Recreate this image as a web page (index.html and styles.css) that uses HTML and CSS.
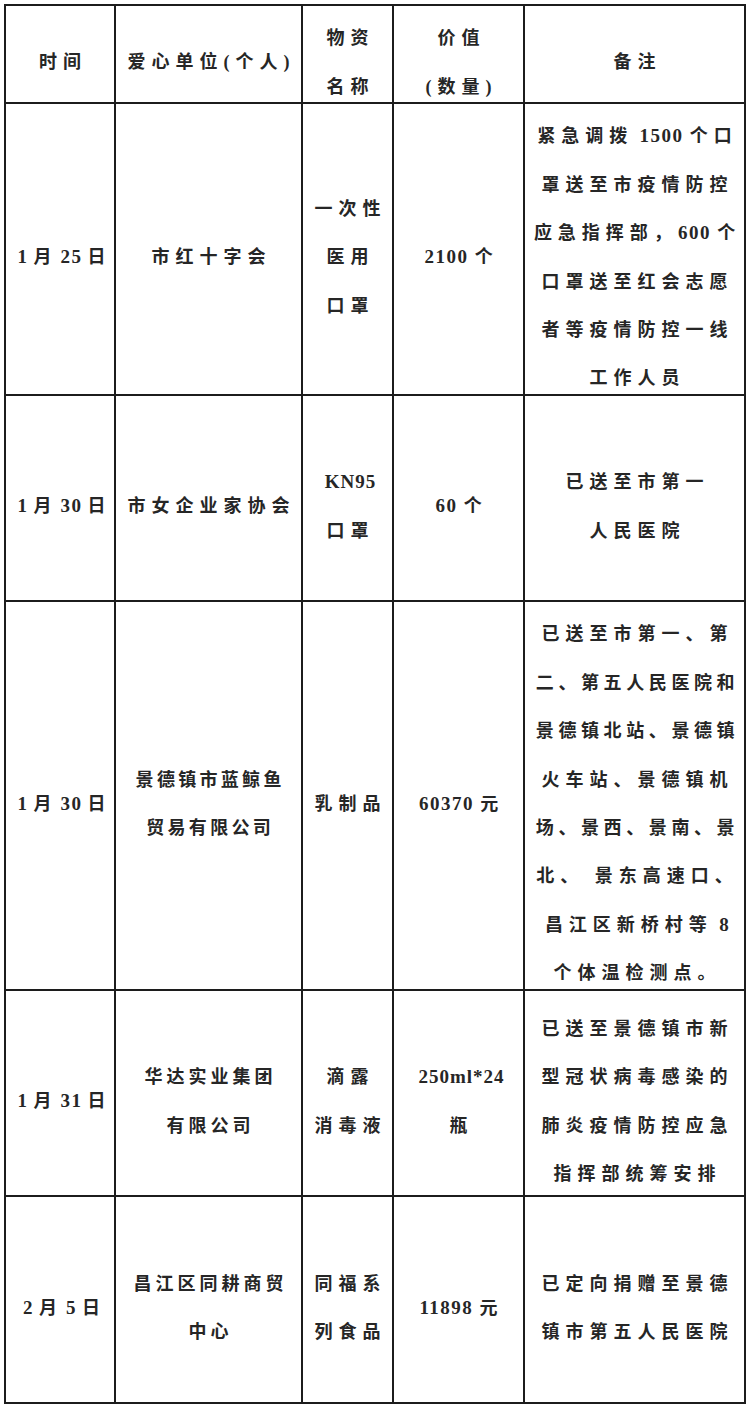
FILE: index.html
```html
<!DOCTYPE html>
<html lang="zh-CN">
<head>
<meta charset="utf-8">
<title>捐赠物资明细</title>
<link rel="stylesheet" href="styles.css">
</head>
<body>
<div class="table">
  <div class="cell"><p>时间</p></div>
  <div class="cell"><p>爱心单位(个人)</p></div>
  <div class="cell"><p>物资<br>名称</p></div>
  <div class="cell"><p>价值<br>(数量)</p></div>
  <div class="cell"><p>备注</p></div>

  <div class="cell date"><p><span class="num">1</span>月<span class="num">25</span>日</p></div>
  <div class="cell"><p>市红十字会</p></div>
  <div class="cell"><p>一次性<br>医用<br>口罩</p></div>
  <div class="cell"><p><span class="num">2100 </span>个</p></div>
  <div class="cell"><p>紧急调拨<span class="num"> 1500 </span>个口<br>罩送至市疫情防控<br>应急指挥部，<span class="num">600 </span>个<br>口罩送至红会志愿<br>者等疫情防控一线<br>工作人员</p></div>

  <div class="cell date"><p><span class="num">1</span>月<span class="num">30</span>日</p></div>
  <div class="cell"><p>市女企业家协会</p></div>
  <div class="cell"><p><span class="num latin">KN95</span><br>口罩</p></div>
  <div class="cell"><p><span class="num">60 </span>个</p></div>
  <div class="cell"><p>已送至市第一<br>人民医院</p></div>

  <div class="cell date"><p><span class="num">1</span>月<span class="num">30</span>日</p></div>
  <div class="cell narrow"><p>景德镇市蓝鲸鱼<br>贸易有限公司</p></div>
  <div class="cell"><p>乳制品</p></div>
  <div class="cell"><p><span class="num">60370 </span>元</p></div>
  <div class="cell"><p>已送至市第一、第<br><span class="tight">二、第五人民医院和</span><br><span class="tight">景德镇北站、景德镇</span><br>火车站、景德镇机<br><span class="tight">场、景西、景南、景</span><br>北、 景东高速口、<br>昌江区新桥村等<span class="num"> 8</span><br>个体温检测点。</p></div>

  <div class="cell date"><p><span class="num">1</span>月<span class="num">31</span>日</p></div>
  <div class="cell medium"><p>华达实业集团<br>有限公司</p></div>
  <div class="cell"><p>滴露<br>消毒液</p></div>
  <div class="cell"><p><span class="num latin">250ml*24</span><br>瓶</p></div>
  <div class="cell"><p>已送至景德镇市新<br>型冠状病毒感染的<br>肺炎疫情防控应急<br>指挥部统筹安排</p></div>

  <div class="cell date"><p><span class="num">2</span>月<span class="num">5</span>日</p></div>
  <div class="cell medium"><p>昌江区同耕商贸<br>中心</p></div>
  <div class="cell"><p>同福系<br>列食品</p></div>
  <div class="cell"><p><span class="num">11898 </span>元</p></div>
  <div class="cell"><p>已定向捐赠至景德<br>镇市第五人民医院</p></div>
</div>
</body>
</html>
```

FILE: styles.css
```css
html, body {
  margin: 0;
  padding: 0;
  background: #ffffff;
}

.table {
  box-sizing: border-box;
  width: 742px;
  margin: 4px 0 0 4px;
  padding: 2px;
  display: grid;
  grid-template-columns: 108px 185px 89px 129px 219px;
  grid-template-rows: 96px 290px 204px 387px 204px 205px;
  gap: 2px;
  background: #1c1c1c;
}

.cell {
  background: #ffffff;
  display: flex;
  flex-direction: column;
  justify-content: center;
  padding: 17px 0 0 6px;
  text-align: center;
  font-family: "Liberation Serif", "Noto Sans CJK SC", serif;
  font-weight: 700;
  font-size: 18px;
  line-height: 48.4px;
  letter-spacing: 6px;
  color: #262626;
  white-space: nowrap;
}

.cell p {
  margin: 0;
}

.num {
  font-size: 19px;
  letter-spacing: 1.5px;
}

.latin {
  letter-spacing: 1px;
}

.date .num {
  padding: 0 5px 0 3px;
}

.tight {
  letter-spacing: 4.6px;
}

.narrow {
  letter-spacing: 3.3px;
  padding-left: 3.3px;
}

.medium {
  letter-spacing: 4px;
  padding-left: 4px;
}
```
